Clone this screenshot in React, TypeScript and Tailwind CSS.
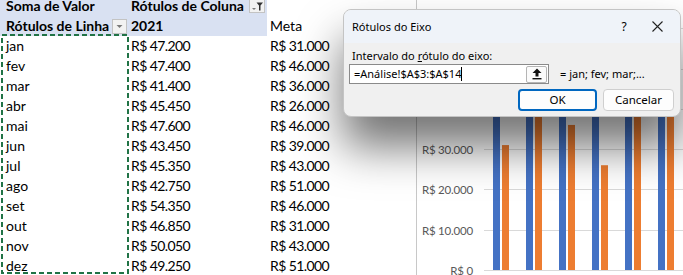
import React from "react";

const rows: [string, string, string][] = [
  ["jan", "R$ 47.200", "R$ 31.000"],
  ["fev", "R$ 47.400", "R$ 46.000"],
  ["mar", "R$ 41.400", "R$ 36.000"],
  ["abr", "R$ 45.450", "R$ 26.000"],
  ["mai", "R$ 47.600", "R$ 46.000"],
  ["jun", "R$ 43.450", "R$ 39.000"],
  ["jul", "R$ 45.350", "R$ 43.000"],
  ["ago", "R$ 42.750", "R$ 51.000"],
  ["set", "R$ 54.350", "R$ 46.000"],
  ["out", "R$ 46.850", "R$ 31.000"],
  ["nov", "R$ 50.050", "R$ 43.000"],
  ["dez", "R$ 49.250", "R$ 51.000"],
];

const real = [47200, 47400, 41400, 45450, 47600, 43450, 45350];
const meta = [31000, 46000, 36000, 26000, 46000, 39000, 43000];

function DropBtn() {
  return (
    <span className="w-[15px] h-[15px] border border-[#c3c3c3] bg-[#f2f2f2] flex items-center justify-center">
      <svg width="9" height="5" viewBox="0 0 9 5">
        <path d="M1.5 1 L7.5 1 L4.5 4 Z" fill="#7a7a7a" />
      </svg>
    </span>
  );
}

function FilterBtn() {
  return (
    <span className="w-[16px] h-[14px] border border-[#c3c3c3] bg-[#f2f2f2] flex items-center justify-center">
      <svg width="13" height="11" viewBox="0 0 13 11">
        <path d="M1 7 L5 7 L3 9 Z" fill="#7a7a7a" />
        <path d="M5.5 1.5 L12 1.5 L9.5 4.5 L9.5 9.5 L8 9.5 L8 4.5 Z" fill="#333" />
      </svg>
    </span>
  );
}

function Chart() {
  const y0 = 270;
  const k = 0.00403;
  const grid = [0, 10000, 20000, 30000, 40000, 50000, 60000];
  return (
    <svg width="267" height="275" className="block">
      <line x1="0.5" y1="0" x2="0.5" y2="275" stroke="#c8c8c8" />
      {grid.map((g) => {
        const y = Math.round(y0 - g * k) + 0.5;
        const label = g === 0 ? "R$ 0" : "R$ " + (g / 1000).toFixed(0) + ".000";
        return (
          <g key={g}>
            <line x1="68" y1={y} x2="267" y2={y} stroke="#d9d9d9" />
            {g <= 30000 && (
              <text
                x="57"
                y={y + 4}
                textAnchor="end"
                fontSize="11.5"
                letterSpacing="-0.2"
                fill="#595959"
                fontFamily="Lato, sans-serif"
              >
                {label}
              </text>
            )}
          </g>
        );
      })}
      {real.map((v, i) => {
        const x = 77 + i * 33;
        const hr = v * k;
        const hm = meta[i] * k;
        return (
          <g key={i}>
            <rect x={x} y={y0 - hr} width="7" height={hr} fill="#4472c4" />
            <rect x={x + 9} y={y0 - hm} width="7" height={hm} fill="#ed7d31" />
          </g>
        );
      })}
    </svg>
  );
}

export default function App() {
  return (
    <div className="relative w-[683px] h-[275px] overflow-hidden bg-white flex">
      <div className="relative w-[340px] shrink-0 mt-[-4px] text-[14px] leading-none text-black font-['Lato',sans-serif]">
        <div className="grid grid-cols-[128px_139px_73px] auto-rows-[20px]">
          <div className="bg-[#d9e1f2] font-bold pl-[6px] flex items-center">Soma de Valor</div>
          <div className="bg-[#d9e1f2] font-bold pl-[3px] pr-[2px] flex items-center justify-between">
            <span>Rótulos de Coluna</span>
            <FilterBtn />
          </div>
          <div />
          <div className="bg-[#d9e1f2] font-bold pl-[6px] pr-[1px] flex items-center justify-between">
            <span>Rótulos de Linha</span>
            <DropBtn />
          </div>
          <div className="bg-[#d9e1f2] font-bold pl-[3px] flex items-center">2021</div>
          <div className="pl-[3px] flex items-center">Meta</div>
          {rows.map(([m, a, b]) => (
            <React.Fragment key={m}>
              <div className="pl-[6px] flex items-center">{m}</div>
              <div className="pl-[3px] flex items-center tracking-[-0.6px]">{a}</div>
              <div className="pl-[3px] flex items-center tracking-[-0.6px]">{b}</div>
            </React.Fragment>
          ))}
        </div>
        <svg className="absolute left-0 top-[4px]" width="131" height="275">
          <rect x="2" y="35" width="126" height="238" fill="none" stroke="#217346" strokeWidth="2" strokeDasharray="5 3" />
        </svg>
      </div>
      <div className="ml-[76px] flex-1">
        <Chart />
      </div>

      <div className="absolute left-[343px] top-[9px] w-[338px] h-[108px] rounded-[8px] border border-[#c4c4c4] bg-[#f0f0f0] shadow-[0_30px_45px_rgba(0,0,0,0.55)] overflow-hidden flex flex-col text-[11px] leading-[16px] text-black font-['Noto_Sans',sans-serif]">
        <div className="h-[33px] shrink-0 bg-[#eff3f9] flex items-center pl-[8px]">
          <span>Rótulos do Eixo</span>
          <span className="ml-auto w-[20px] text-center text-[12px]">?</span>
          <span className="w-[46px] flex justify-center">
            <svg width="11" height="11" viewBox="0 0 11 11">
              <path d="M0.5 0.5 L10.5 10.5 M10.5 0.5 L0.5 10.5" stroke="#222" strokeWidth="1.1" />
            </svg>
          </span>
        </div>
        <div className="flex-1 flex flex-col px-[5px] pt-[5px]">
          <div className="pl-[3px]">
            Intervalo do <span className="underline">r</span>ótulo do eixo:
          </div>
          <div className="flex items-center">
            <div className="w-[200px] h-[20px] bg-white border border-[#8a8a8a] flex items-center pl-[4px] pr-[1px]">
              <span>=Análise!$A$3:$A$14</span>
              <span className="w-[1px] h-[14px] bg-black" />
              <span className="ml-auto w-[21px] h-[17px] rounded-[2px] border border-[#b5b5b5] bg-[#fbfbfb] flex items-center justify-center">
                <svg width="10" height="12" viewBox="0 0 10 12">
                  <path d="M5 0.5 L9.5 5 L6.5 5 L6.5 8.5 L3.5 8.5 L3.5 5 L0.5 5 Z" fill="#111" />
                  <rect x="0.5" y="10" width="9" height="1.4" fill="#111" />
                </svg>
              </span>
            </div>
            <span className="ml-[11px]">= jan; fev; mar;...</span>
          </div>
          <div className="flex justify-end gap-[6px] mt-[5px] pr-[1px]">
            <button className="w-[79px] h-[22px] rounded-[4px] border-2 border-[#0067c0] bg-[#fdfdfd] text-[11.5px] leading-none">OK</button>
            <button className="w-[71px] h-[22px] rounded-[4px] border border-[#cfcfcf] bg-[#fdfdfd] text-[11.5px] leading-none">Cancelar</button>
          </div>
        </div>
      </div>
    </div>
  );
}
